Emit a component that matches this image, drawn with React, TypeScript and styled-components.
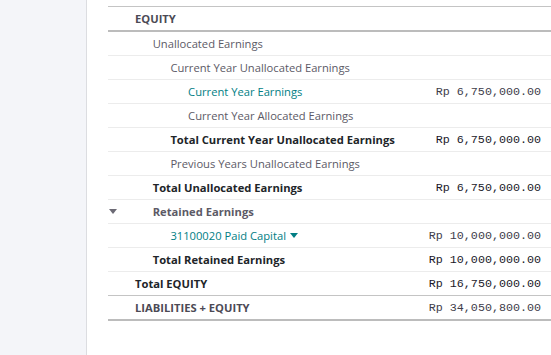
import React from 'react';
import styled, { createGlobalStyle } from 'styled-components';

const GlobalStyle = createGlobalStyle`
  html, body {
    margin: 0;
    padding: 0;
    background: #ffffff;
  }
  body {
    font-family: "Open Sans", "Noto Sans", sans-serif;
  }
`;

const Page = styled.div`
  display: grid;
  grid-template-columns: 87px 1fr;
  width: 551px;
  height: 355px;
  overflow: hidden;
`;

const Sidebar = styled.div`
  background: #f4f5f9;
  border-right: 1px solid #dcdde1;
`;

const Main = styled.div`
  padding: 6px 0 0 21px;
`;

const Table = styled.div`
  border-top: 1px solid #c4c4c4;
  border-bottom: 2px solid #bcbcbc;
`;

type Tone = 'normal' | 'total' | 'link' | 'muted' | 'head';

const toneColor: Record<Tone, string> = {
  normal: '#5c5a66',
  total: '#212529',
  link: '#017e84',
  muted: '#5c5a66',
  head: '#4c4a55',
};

const Row = styled.div<{ $line?: 'light' | 'thick' | 'mid' }>`
  display: flex;
  align-items: center;
  height: 23px;
  border-bottom: ${(p) =>
    p.$line === 'thick'
      ? '2px solid #bcbcbc'
      : p.$line === 'mid'
      ? '1px solid #c4c4c4'
      : '1px solid #ececec'};
  &:last-child {
    border-bottom: none;
  }
`;

const Caret = styled.span`
  width: 27px;
  flex: none;
  display: flex;
  align-items: center;
  padding-left: 1px;
  box-sizing: border-box;
`;

const Label = styled.div<{ $level: number; $tone: Tone; $bold?: boolean }>`
  flex: 1;
  padding-left: ${(p) => p.$level * 17.7}px;
  font-size: 11.2px;
  font-weight: ${(p) => (p.$bold ? 700 : 400)};
  color: ${(p) => toneColor[p.$tone]};
  white-space: nowrap;
  display: flex;
  align-items: center;
  gap: 4px;
`;

const Amount = styled.div<{ $tone: Tone }>`
  font-family: "Liberation Mono", "Courier New", monospace;
  font-size: 11.7px;
  color: ${(p) => (p.$tone === 'total' ? '#1a1828' : '#3e3c4a')};
  padding-right: 10px;
  white-space: nowrap;
`;

const Triangle = ({ color }: { color: string }) => (
  <svg width="8" height="5" viewBox="0 0 8 5">
    <polygon points="0,0 8,0 4,5" fill={color} />
  </svg>
);

interface Line {
  label: string;
  level: number;
  tone: Tone;
  bold?: boolean;
  amount?: string;
  amountTone?: Tone;
  line?: 'light' | 'thick' | 'mid';
  folded?: boolean;
  dropdown?: boolean;
}

const lines: Line[] = [
  { label: 'EQUITY', level: 0, tone: 'head', bold: true, line: 'thick' },
  { label: 'Unallocated Earnings', level: 1, tone: 'normal' },
  { label: 'Current Year Unallocated Earnings', level: 2, tone: 'normal' },
  { label: 'Current Year Earnings', level: 3, tone: 'link', amount: 'Rp 6,750,000.00', amountTone: 'muted' },
  { label: 'Current Year Allocated Earnings', level: 3, tone: 'normal' },
  { label: 'Total Current Year Unallocated Earnings', level: 2, tone: 'total', bold: true, amount: 'Rp 6,750,000.00', amountTone: 'total' },
  { label: 'Previous Years Unallocated Earnings', level: 2, tone: 'normal' },
  { label: 'Total Unallocated Earnings', level: 1, tone: 'total', bold: true, amount: 'Rp 6,750,000.00', amountTone: 'total' },
  { label: 'Retained Earnings', level: 1, tone: 'muted', bold: true, folded: true },
  { label: '31100020 Paid Capital', level: 2, tone: 'link', amount: 'Rp 10,000,000.00', amountTone: 'muted', dropdown: true },
  { label: 'Total Retained Earnings', level: 1, tone: 'total', bold: true, amount: 'Rp 10,000,000.00', amountTone: 'total' },
  { label: 'Total EQUITY', level: 0, tone: 'total', bold: true, amount: 'Rp 16,750,000.00', amountTone: 'total', line: 'mid' },
  { label: 'LIABILITIES + EQUITY', level: 0, tone: 'head', bold: true, amount: 'Rp 34,050,800.00', amountTone: 'muted' },
];

export default function App() {
  return (
    <>
      <GlobalStyle />
      <Page>
        <Sidebar />
        <Main>
          <Table>
            {lines.map((l, i) => (
              <Row key={i} $line={l.line}>
                <Caret>{l.folded && <Triangle color="#6c6a75" />}</Caret>
                <Label $level={l.level} $tone={l.tone} $bold={l.bold}>
                  {l.label}
                  {l.dropdown && <Triangle color="#017e84" />}
                </Label>
                {l.amount && <Amount $tone={l.amountTone || 'normal'}>{l.amount}</Amount>}
              </Row>
            ))}
          </Table>
        </Main>
      </Page>
    </>
  );
}
